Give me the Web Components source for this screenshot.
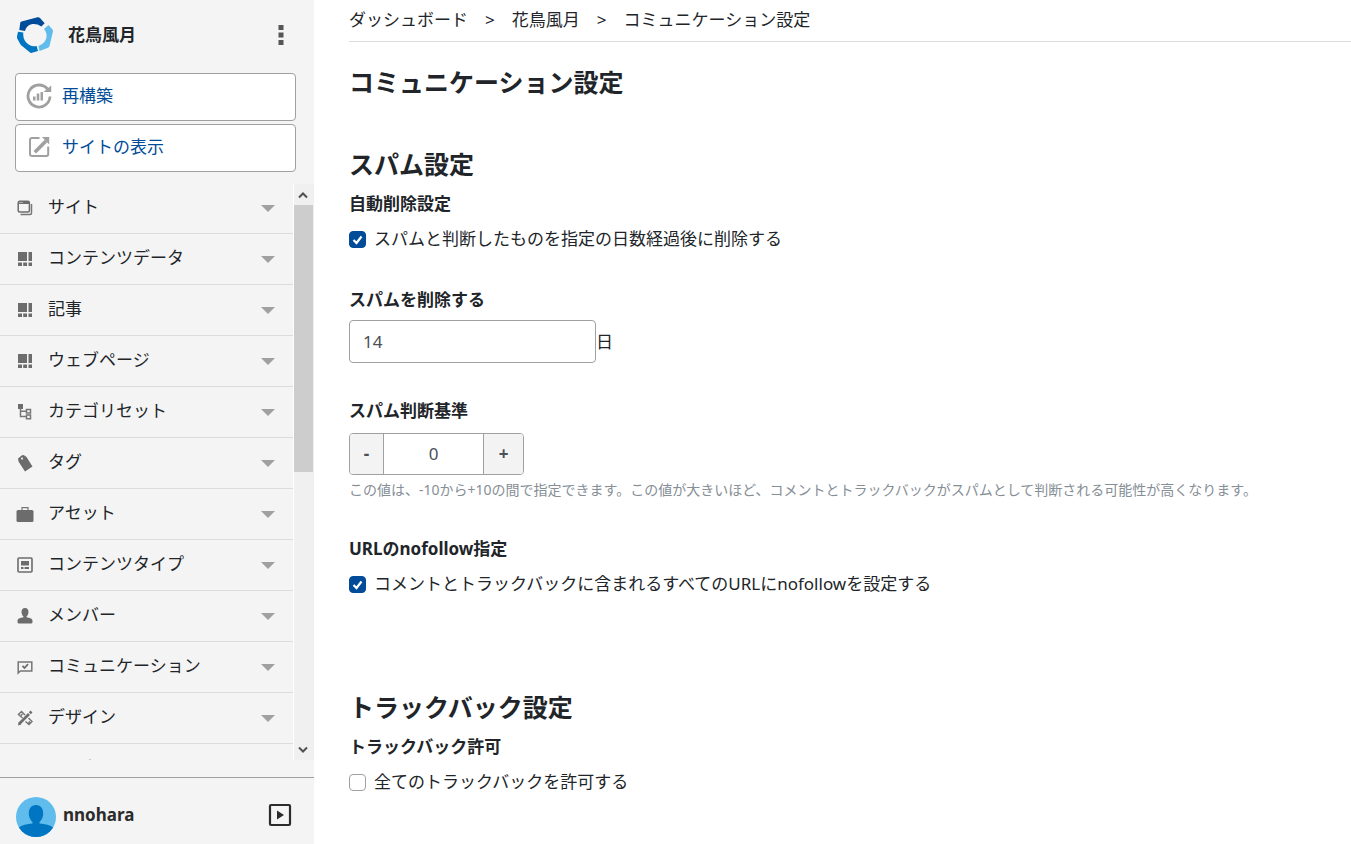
<!DOCTYPE html>
<html lang="ja">
<head>
<meta charset="utf-8">
<title>コミュニケーション設定</title>
<style>
html, body { margin: 0; height: 100%; }
body {
  font-family: "Noto Sans", "Noto Sans CJK JP", sans-serif;
  font-size: 17px; line-height: 24px; color: #212529; background: #fff;
}
</style>
</head>
<body>
<cms-app></cms-app>
<script>
const ICONS = {
  logo: [36, `<path fill="#004c9b" d="M4.500 4.500 20.500.3q1.500-.3 2.500.8L27.700 6.300 24.300 9.500C20 6.500 14.500 6.200 11 9 9.500 10.200 8.800 11.500 8 14L2.300 13 3.200 6q.2-1.200 1.300-1.500Z"/><path fill="#5fbcec" d="M31.500 8 35.500 12.500q.7 1 .4 2.200L32.500 29q-.3 1.300-1.500 1.800L22.500 34 21.500 29C27.500 26.500 30 22.500 29.500 17.500 29.300 15.500 28.500 14 27 12Z"/><path fill="#0075c2" d="M1 14.800 6.300 15.500C5.800 20.500 7.500 25 12 27.800 14.500 29.300 17 29.700 19.700 29L21 34 15 35.800q-1.300.3-2.300-.5L4.500 28.500q-1-.7-1.400-1.700L.2 21.500Q-.2 20.500 0 19.500Z"/>`],
  dots: [24, `<path fill="#555" d="M9.500 2h5v5h-5zM9.500 9.500h5v5h-5zM9.500 17h5v5h-5z"/>`],
  rebuild: [26, `<path fill="none" stroke="#a0a0a0" stroke-width="2.800" d="M21.500 6A11 11 0 1 0 24 13.500"/><path fill="#a0a0a0" d="M17.500 9h7.700V2.500zM7 13.500h2.500v4H7zM10.700 10.500h2.600v7h-2.600zM14.500 9h2.500v8.500h-2.500z"/>`],
  open: [22, `<path fill="none" stroke="#a0a0a0" stroke-width="2" d="M11.500 2H4Q2 2 2 4v14Q2 20 4 20H18.500q1.700 0 1.700-2V10.500"/><path fill="none" stroke="#a0a0a0" stroke-width="3.600" d="M6.800 16.200 18 5"/><path fill="#a0a0a0" d="M14 1h7.200v7.500z"/>`],
  site: [16, `<path fill="none" stroke="#767676" stroke-width="1.500" d="M3.500 14.500H13q1.500 0 1.500-1.500V4"/><rect x="1.200" y="1.200" width="11.200" height="10.800" rx="1.500" fill="#f4f4f4" stroke="#6c6c6c" stroke-width="1.500"/><path fill="#6c6c6c" d="M1.500 1.500h10.500v2.500H1.500z"/><path fill="#f4f4f4" d="M2.500 2h1v1h-1zM4.500 2h1v1h-1z"/>`],
  data: [16, `<path fill="#6c6c6c" d="M1 1h9v9H1zM11.500 1H15v9h-3.500zM1 11.500h4V15H1zM6.200 11.500h3.800V15H6.200zM11.500 11.500H15V15h-3.500z"/>`],
  tree: [16, `<path fill="#6c6c6c" d="M1 0h5v5H1z"/><path fill="none" stroke="#767676" stroke-width="1.500" d="M3.500 4v8.500H9M3.500 7.200H9M9.500 5.500h4v3.500h-4zM9.500 11h4v3.800h-4z"/>`],
  tag: [18, `<path fill="#6c6c6c" fill-rule="evenodd" d="M2 4.500 6 1.200q1-.6 2 0L10.500 3l6 9.500L9 17.500 2.500 7.500zM6 3.500a1 1 0 1 0 .1 0z"/>`],
  bag: [18, `<rect x=".5" y="5" width="17" height="12" rx="1.500" fill="#6c6c6c"/><path fill="none" stroke="#767676" stroke-width="1.200" d="M6 5V2.600h6V5"/>`],
  type: [16, `<rect x="1" y="1" width="14" height="14" rx="1" fill="none" stroke="#6c6c6c" stroke-width="1.600"/><path fill="#6c6c6c" d="M4 4h8v4.500H4zM4 10h2.500v2H4zM7.500 10H12v2H7.500z"/>`],
  member: [16, `<path fill="#6c6c6c" d="M8 0C5.500 0 4.500 2 4.500 4c0 1.800.8 3.500 2 4.500v.8C3 10 .5 10.500.5 13v1q0 1.500 1.500 1.500h12q1.500 0 1.500-1.500v-1c0-2.500-2.500-3-6-3.700v-.8c1.200-1 2-2.700 2-4.500C11.500 2 10.500 0 8 0z"/>`],
  comm: [16, `<path fill="none" stroke="#767676" stroke-width="1.500" d="M1.200 14V3h13.600v9H3.400z"/><path fill="none" stroke="#6c6c6c" stroke-width="1.800" d="M5.500 6.800 7.500 9l3.500-3.800"/>`],
  design: [16, `<path fill="none" stroke="#6c6c6c" stroke-width="2.800" d="M2.500 13.500 12 4M12.800 3.200l1.700-1.700"/><path fill="#6c6c6c" d="M1 15.500 1.600 12 4.200 14.500z"/><path fill="none" stroke="#767676" stroke-width="1.500" d="M5.500 8 1.500 4.500l3-3L8 5M4 5.500 5.500 4M8.500 11.500l3.500 3 3-3-3.500-3.500M11.500 13l1.500-1.500"/>`],
  avatar: [40, `<defs><clipPath id="c"><circle cx="20" cy="20" r="20"/></clipPath></defs><g clip-path="url(#c)"><path fill="#5fbcec" d="M0 0h40v40H0z"/><path fill="#0075c2" d="M20 8c-5 0-7.200 4-7.200 8.500 0 4 1.700 6.800 3.700 8.500v1.500C11 27 6 28 2 31v9h36v-9c-4-3-9-4-14.500-4.500V25c2-1.700 3.700-4.500 3.700-8.500C27.200 12 25 8 20 8z"/></g>`],
  play: [24, `<rect x="2" y="2" width="20" height="20" rx="1" fill="none" stroke="#2b2b2b" stroke-width="2.200"/><path fill="#2b2b2b" d="M9 7.500v9L16 12z"/>`],
  caret: [14, `<path fill="#a0a0a0" d="M0 4h14l-7 7z"/>`],
  up: [10, `<path fill="none" stroke="#505050" stroke-width="2" d="M1 7.500 5 3.500l4 4"/>`],
  down: [10, `<path fill="none" stroke="#505050" stroke-width="2" d="M1 2.500 5 6.500l4-4"/>`]
};

function define(name, render) {
  customElements.define(name, class extends HTMLElement {
    constructor() { super(); this.attachShadow({ mode: 'open' }); }
    connectedCallback() {
      this.shadowRoot.innerHTML = '<style>*{box-sizing:border-box}button,input{font:inherit;color:inherit;margin:0}</style>' + render(this);
    }
  });
}

define('cms-icon', el => {
  const [size, art] = ICONS[el.getAttribute('name')];
  return `<style>:host{display:block;flex:none;width:${size}px;height:${size}px}svg{display:block}</style>
  <svg width="${size}" height="${size}" viewBox="0 0 ${size} ${size}" aria-hidden="true">${art}</svg>`;
});

define('cms-action', el => {
  const href = el.getAttribute('href');
  const inner = `<span class="i"><cms-icon name="${el.getAttribute('icon')}"></cms-icon></span><slot></slot>`;
  return `<style>:host{display:block}
  .a{display:flex;align-items:center;gap:10px;width:100%;height:48px;padding:0 10px 2px;background:#fff;border:1px solid #a0a0a0;border-radius:4px;color:#004c98;text-decoration:none;text-align:left;cursor:pointer}
  .i{display:flex;justify-content:center;width:26px}</style>` +
  (href ? `<a class="a" href="${href}">${inner}</a>` : `<button class="a" type="button">${inner}</button>`);
});

define('cms-menu-item', el => `<style>:host{display:block}
  button{display:flex;align-items:center;width:100%;height:51px;padding:0 18px 0 15px;background:none;border:0;border-bottom:1px solid #dcdcdc;text-align:left;cursor:pointer}
  .i{display:flex;justify-content:center;width:19px;margin-right:14px}
  .t{flex:1;padding-bottom:2px}</style>
  <button type="button" aria-expanded="false"><span class="i"><cms-icon name="${el.getAttribute('icon')}"></cms-icon></span><span class="t"><slot></slot></span><cms-icon name="caret"></cms-icon></button>`);

define('cms-menu', () => `<style>
  :host{display:grid;grid-template-columns:1fr 21px;flex:1;min-height:0}
  .list{overflow-y:auto;scrollbar-width:none;min-height:0}
  .bar{display:flex;flex-direction:column;margin-top:1px;background:#f0f0f0;border-left:1px solid #fff}
  .end{display:flex;align-items:center;justify-content:center;height:21px;flex:none;padding-right:2px}
  .track{flex:1}.thumb{height:50%;margin-right:1px;background:#cdcdcd}</style>
  <nav class="list" aria-label="メニュー"><slot></slot></nav>
  <div class="bar" aria-hidden="true"><span class="end"><cms-icon name="up"></cms-icon></span><div class="track"><div class="thumb"></div></div><span class="end"><cms-icon name="down"></cms-icon></span></div>`);

define('cms-sidebar', () => `<style>
  :host{display:flex;flex-direction:column;flex:none;width:314px;background:#f4f4f4}
  header{display:flex;align-items:center;height:73px;padding:0 21px 3px 17px;gap:15px;flex:none}
  strong{flex:1}
  .plain{display:flex;align-items:center;padding:0;border:0;background:none;cursor:pointer}
  .actions{display:grid;gap:3px;padding:0 18px 11px 15px;flex:none}
  footer{display:flex;align-items:flex-start;gap:7px;height:67px;margin-top:17px;padding:19px 22px 0 16px;border-top:1px solid #a0a0a0;flex:none}
  footer strong{line-height:36px;color:#2b2b2b}
  footer .plain{height:36px}</style>
  <header><cms-icon name="logo"></cms-icon><strong>花鳥風月</strong><button class="plain" type="button" aria-label="サイトメニュー"><cms-icon name="dots"></cms-icon></button></header>
  <div class="actions"><cms-action icon="rebuild">再構築</cms-action><cms-action icon="open" href="#site">サイトの表示</cms-action></div>
  <cms-menu>
    <cms-menu-item icon="site">サイト</cms-menu-item>
    <cms-menu-item icon="data">コンテンツデータ</cms-menu-item>
    <cms-menu-item icon="data">記事</cms-menu-item>
    <cms-menu-item icon="data">ウェブページ</cms-menu-item>
    <cms-menu-item icon="tree">カテゴリセット</cms-menu-item>
    <cms-menu-item icon="tag">タグ</cms-menu-item>
    <cms-menu-item icon="bag">アセット</cms-menu-item>
    <cms-menu-item icon="type">コンテンツタイプ</cms-menu-item>
    <cms-menu-item icon="member">メンバー</cms-menu-item>
    <cms-menu-item icon="comm">コミュニケーション</cms-menu-item>
    <cms-menu-item icon="design">デザイン</cms-menu-item>
    <cms-menu-item icon="type">カスタムフィールド</cms-menu-item>
  </cms-menu>
  <footer><cms-icon name="avatar"></cms-icon><strong>nnohara</strong><button class="plain" type="button" aria-label="メニューを閉じる"><cms-icon name="play"></cms-icon></button></footer>`);

define('cms-breadcrumb', () => `<style>
  :host{display:block}
  ol{display:flex;flex-wrap:wrap;margin:0;padding:8px 0 9px;list-style:none;border-bottom:1px solid #dcdcdc}
  li+li::before{content:">";padding:0 17px}
  a{color:inherit;text-decoration:none}</style>
  <nav aria-label="パンくず"><ol><li><a href="#dashboard">ダッシュボード</a></li><li><a href="#kacho">花鳥風月</a></li><li aria-current="page">コミュニケーション設定</li></ol></nav>`);

define('cms-section', el => `<style>
  :host{display:block}
  h2{margin:0 0 9px;font-size:25px;line-height:38px;font-weight:700}
  .fields{display:grid;gap:36px}</style>
  <section><h2>${el.getAttribute('heading')}</h2><div class="fields"><slot></slot></div></section>`);

const LABEL = '.label{display:block;margin:0 0 10px;padding:0;font-weight:700}fieldset{border:0;margin:0;padding:0;min-width:0}';

define('cms-check', el => `<style>:host{display:block}${LABEL}
  .row{display:flex;align-items:center;gap:8px;min-height:26px}
  input{appearance:none;flex:none;width:17px;height:17px;border:1px solid #a0a0a0;border-radius:4px;background:#fff}
  input:checked{border-color:#004c98;background:#004c98 url("data:image/svg+xml,%3Csvg xmlns='http://www.w3.org/2000/svg' viewBox='0 0 15 15'%3E%3Cpath fill='none' stroke='white' stroke-width='2.200' d='M3.500 8 6.500 11 11.500 4.500'/%3E%3C/svg%3E") center/15px no-repeat}</style>
  <fieldset><legend class="label">${el.getAttribute('label')}</legend>
  <div class="row"><input id="c" type="checkbox" ${el.hasAttribute('checked') ? 'checked' : ''}><label for="c"><slot></slot></label></div></fieldset>`);

define('cms-number', el => `<style>:host{display:block}${LABEL}
  .label{margin-bottom:8px}
  .row{display:flex;align-items:center}
  input{width:247px;height:43px;padding:0 13px;border:1px solid #a0a0a0;border-radius:4px;color:#495057;background:#fff}</style>
  <label class="label" for="n">${el.getAttribute('label')}</label>
  <div class="row"><input id="n" type="text" inputmode="numeric" value="${el.getAttribute('value')}"><span><slot></slot></span></div>`);

define('cms-stepper', el => `<style>:host{display:block}${LABEL}
  .row{display:flex;width:175px;height:42px;border:1px solid #a0a0a0;border-radius:4px;overflow:hidden;color:#495057}
  button{flex:none;padding:0;border:0;background:#f3f3f3;font-weight:700;cursor:pointer}
  .minus{width:33px}.plus{width:39px}
  input{flex:1;min-width:0;padding:0;text-align:center;background:#fff;border:solid #a0a0a0;border-width:0 1px}
  p{margin:4px 0 0;font-size:14px;line-height:22px;color:#868e96}</style>
  <label class="label" for="s">${el.getAttribute('label')}</label>
  <div class="row"><button class="minus" type="button">-</button><input id="s" type="text" inputmode="numeric" value="${el.getAttribute('value')}" aria-describedby="h"><button class="plus" type="button">+</button></div>
  <p id="h"><slot></slot></p>`);

define('cms-app', () => `<style>
  :host{display:flex;height:100vh}
  main{flex:1;min-width:0;padding-left:35px;overflow-y:auto;scrollbar-width:none}
  h1{margin:21px 0 44px;font-size:25px;line-height:38px;font-weight:700}
  form{display:grid;gap:91px;padding-bottom:24px}</style>
  <cms-sidebar></cms-sidebar>
  <main>
    <cms-breadcrumb></cms-breadcrumb>
    <h1>コミュニケーション設定</h1>
    <form>
      <cms-section heading="スパム設定">
        <cms-check label="自動削除設定" checked>スパムと判断したものを指定の日数経過後に削除する</cms-check>
        <cms-number label="スパムを削除する" value="14">日</cms-number>
        <cms-stepper label="スパム判断基準" value="0">この値は、-10から+10の間で指定できます。この値が大きいほど、コメントとトラックバックがスパムとして判断される可能性が高くなります。</cms-stepper>
        <cms-check label="URLのnofollow指定" checked>コメントとトラックバックに含まれるすべてのURLにnofollowを設定する</cms-check>
      </cms-section>
      <cms-section heading="トラックバック設定">
        <cms-check label="トラックバック許可">全てのトラックバックを許可する</cms-check>
      </cms-section>
    </form>
  </main>`);
</script>
</body>
</html>
